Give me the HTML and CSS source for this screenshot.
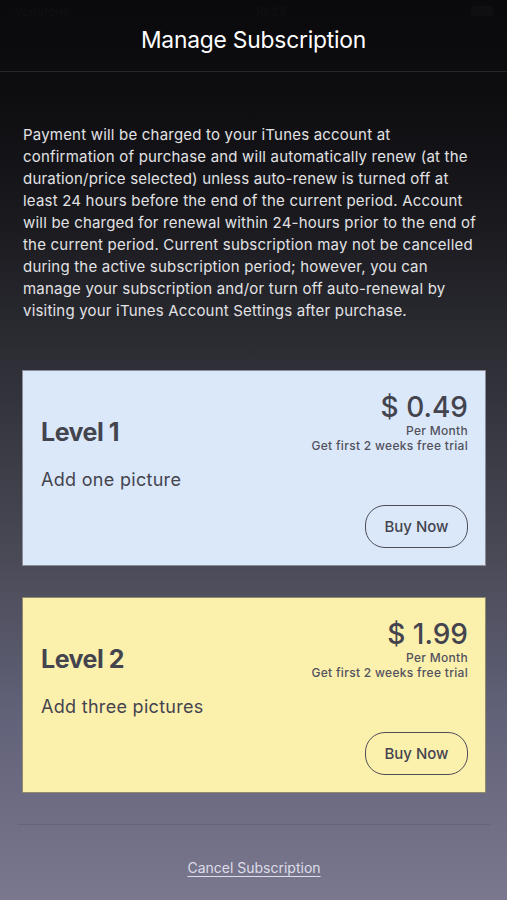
FILE: index.html
```html
<!DOCTYPE html>
<html>
<head>
<meta charset="utf-8">
<link rel="stylesheet" href="styles.css">
</head>
<body>
<div class="screen">
  <div class="status">
    <span class="carrier">Vodafone</span>
    <span class="clock">10:25</span>
    <span class="battery"></span>
  </div>
  <header class="header">
    <h1 class="title">Manage Subscription</h1>
  </header>
  <main class="content">
    <p class="terms">Payment will be charged to your iTunes account at confirmation of purchase and will automatically renew (at the duration/price selected) unless auto-renew is turned off at least 24 hours before the end of the current period. Account will be charged for renewal within 24-hours prior to the end of the current period. Current subscription may not be cancelled during the active subscription period; however, you can manage your subscription and/or turn off auto-renewal by visiting your iTunes Account Settings after purchase.</p>

    <section class="card card-blue">
      <div class="card-left">
        <div class="level">Level 1</div>
        <div class="desc">Add one picture</div>
      </div>
      <div class="card-right">
        <div class="price">$ 0.49</div>
        <div class="small">Per Month</div>
        <div class="small">Get first 2 weeks free trial</div>
        <button class="buy">Buy Now</button>
      </div>
    </section>

    <section class="card card-yellow">
      <div class="card-left">
        <div class="level">Level 2</div>
        <div class="desc">Add three pictures</div>
      </div>
      <div class="card-right">
        <div class="price">$ 1.99</div>
        <div class="small">Per Month</div>
        <div class="small">Get first 2 weeks free trial</div>
        <button class="buy">Buy Now</button>
      </div>
    </section>

    <hr class="divider">
    <a class="cancel" href="#">Cancel Subscription</a>
  </main>
</div>
</body>
</html>
```

FILE: styles.css
```css
* { box-sizing: border-box; }
html, body { margin: 0; padding: 0; }
body {
  width: 507px;
  height: 900px;
  overflow: hidden;
  font-family: Inter, "Noto Sans", sans-serif;
}
.screen {
  height: 900px;
  background: linear-gradient(to bottom, #0a0a0c 0%, #0d0d10 10%, #1a1a1f 25%, #2e2e36 40%, #4a4a57 62%, #62627a 80%, #7a788e 100%);
  display: flex;
  flex-direction: column;
}
.status {
  height: 22px;
  display: flex;
  justify-content: space-between;
  align-items: center;
  padding: 0 14px;
  font-size: 12px;
  color: #0f0f12;
  font-weight: 600;
}
.battery {
  width: 22px; height: 10px; border: 1px solid #111113; border-radius: 2px; background: #0f0f11;
}
.header {
  height: 50px;
  border-bottom: 1px solid #26262b;
  display: flex;
  align-items: center;
  justify-content: center;
}
.title {
  margin: 0;
  color: #ffffff;
  font-size: 22.8px;
  font-weight: 400;
  letter-spacing: -0.2px;
  padding-bottom: 14px;
}
.content {
  padding: 0 21px 0 22px;
  display: flex;
  flex-direction: column;
}
.terms {
  margin: 52px 0 0 1px;
  color: #e2e2e4;
  font-size: 15px;
  line-height: 22px;
  letter-spacing: 0.2px;
}
.card {
  margin-top: 48px;
  height: 196px;
  border: 1px solid #8c8c98;
  display: flex;
  justify-content: space-between;
  padding: 20px 17px 17px 18px;
  color: #44444f;
}
.card + .card { margin-top: 31px; }
.card-blue { background: #dbe8f9; }
.card-yellow { background: #fcf0ad; border-color: #8e8a6c; }
.card-left {
  display: flex;
  flex-direction: column;
  padding-top: 26px;
}
.level {
  font-size: 25px;
  font-weight: 700;
  letter-spacing: -0.5px;
  line-height: 30px;
}
.desc {
  margin-top: 21px;
  font-size: 18px;
  letter-spacing: 0.3px;
  line-height: 24px;
}
.card-right {
  display: flex;
  flex-direction: column;
  align-items: flex-end;
}
.price {
  font-size: 28px;
  font-weight: 500;
  line-height: 32px;
}
.small {
  font-size: 12px;
  letter-spacing: 0.3px;
  line-height: 15px;
  font-weight: 500;
  color: #52525e;
}
.buy {
  margin-top: auto;
  width: 103px;
  height: 43px;
  border: 1.3px solid #4d4d58;
  border-radius: 20px;
  background: transparent;
  font-family: inherit;
  font-size: 15px;
  font-weight: 500;
  color: #44444f;
}
.divider {
  margin: 31px -4px 0 -4px;
  border: 0;
  border-top: 1px solid #64647a;
  height: 0;
}
.cancel {
  margin-top: 34px;
  align-self: center;
  color: #dedde8;
  font-size: 14px;
  text-decoration: underline;
  text-underline-offset: 3px;
}
```
